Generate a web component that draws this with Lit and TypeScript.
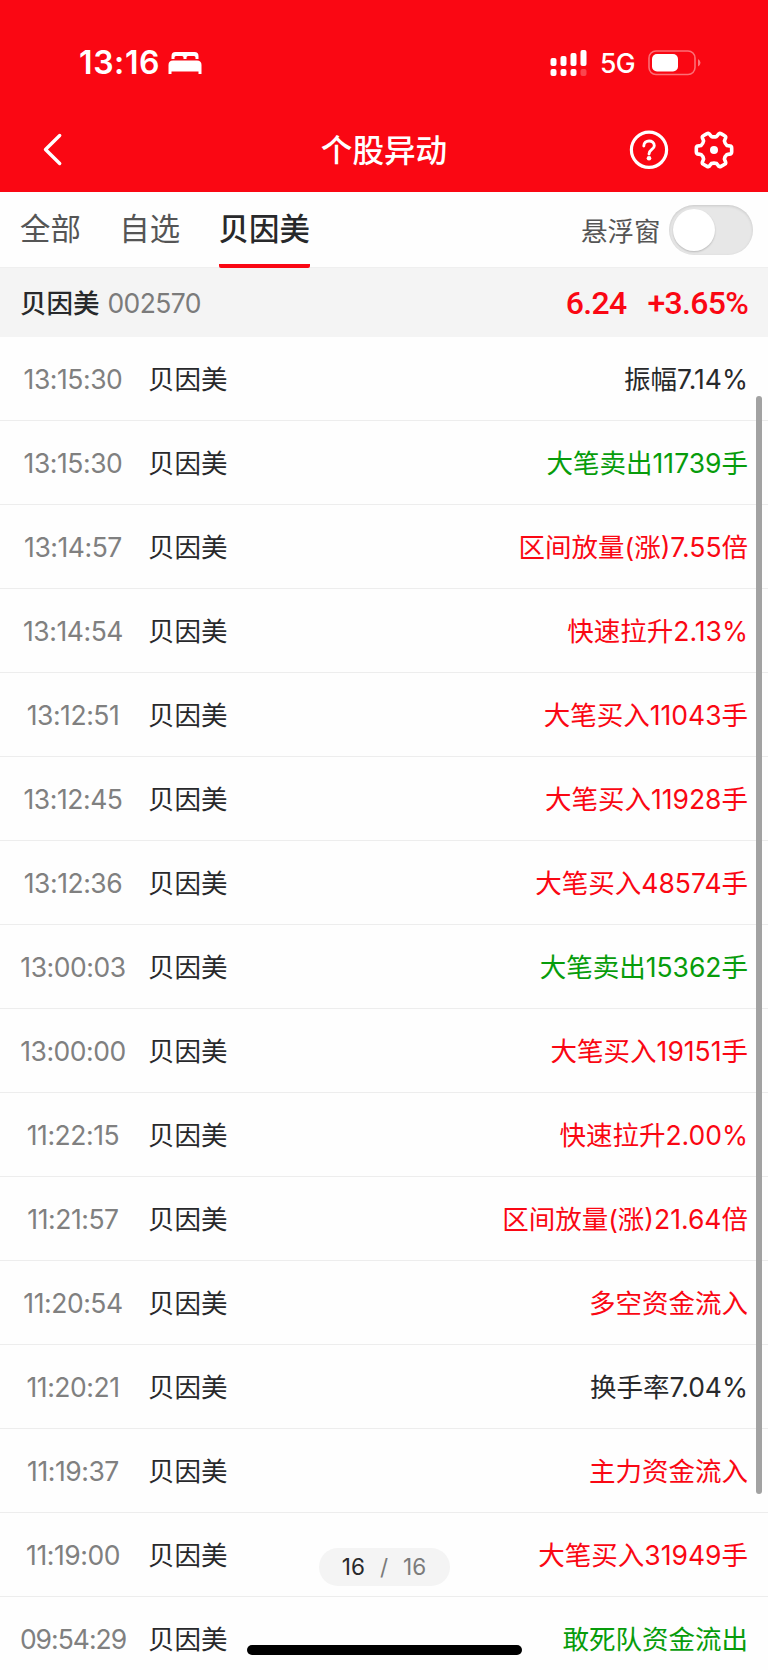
import { LitElement, html, css } from "lit";
import { customElement } from "lit/decorators.js";

type Tone = "plain" | "up" | "down";
const EVENTS: [string, string, Tone][] = [
  ["13:15:30", "振幅7.14%", "plain"],
  ["13:15:30", "大笔卖出11739手", "down"],
  ["13:14:57", "区间放量(涨)7.55倍", "up"],
  ["13:14:54", "快速拉升2.13%", "up"],
  ["13:12:51", "大笔买入11043手", "up"],
  ["13:12:45", "大笔买入11928手", "up"],
  ["13:12:36", "大笔买入48574手", "up"],
  ["13:00:03", "大笔卖出15362手", "down"],
  ["13:00:00", "大笔买入19151手", "up"],
  ["11:22:15", "快速拉升2.00%", "up"],
  ["11:21:57", "区间放量(涨)21.64倍", "up"],
  ["11:20:54", "多空资金流入", "up"],
  ["11:20:21", "换手率7.04%", "plain"],
  ["11:19:37", "主力资金流入", "up"],
  ["11:19:00", "大笔买入31949手", "up"],
  ["09:54:29", "敢死队资金流出", "down"],
];

// Six-toothed cog outline centred on (20, 20).
const at = (r: number, deg: number) => {
  const a = (deg * Math.PI) / 180;
  return `${(20 + r * Math.cos(a)).toFixed(2)} ${(20 + r * Math.sin(a)).toFixed(2)}`;
};
const COG =
  [0, 60, 120, 180, 240, 300]
    .map(
      (d, i) =>
        `${i ? "L" : "M"}${at(13.8, d - 19)} L${at(16, d - 15)} Q${at(18.2, d - 13)} ${at(17.8, d - 7)} L${at(17.8, d + 7)} Q${at(18.2, d + 13)} ${at(16, d + 15)} L${at(13.8, d + 19)} Q${at(12.6, d + 30)} ${at(13.8, d + 41)}`
    )
    .join(" ") + "Z";

@customElement("app-root")
export class AppRoot extends LitElement {
  static styles = css`
    :host { display: block; position: relative; width: 768px; height: 1670px; overflow: hidden; background: #fefefe; color: #28292b; font-family: "Inter", "Noto Sans CJK SC", sans-serif; font-size: 26.5px; white-space: nowrap; }
    * { box-sizing: border-box; }
    svg { display: block; flex: none; }
    .top { height: 192px; background: #fa0713; color: #fff; }
    .status { height: 108px; padding: 17px 67px 0 79px; display: flex; align-items: center; }
    .clock { font-size: 32px; font-weight: 600; letter-spacing: 0.6px; width: 89px; }
    .net { font-size: 26.5px; font-weight: 500; margin: 1px 13px 0 12px; letter-spacing: -0.6px; width: 35px; }
    .signal { margin-left: auto; }
    .nav { height: 84px; display: grid; grid-template-columns: 200px 1fr 200px; align-items: center; }
    .back { margin-left: 41px; }
    .title { text-align: center; font-size: 31.6px; font-weight: 500; padding: 0 0 4px 0; }
    .tools { display: flex; gap: 25px; justify-content: flex-end; padding-right: 34px; }
    .tabs { height: 76px; display: flex; padding: 0 15.5px 0 20px; gap: 38.5px; border-bottom: 1px solid #efefef; }
    .tab { height: 76px; line-height: 74px; font-size: 30.4px; color: #555; border-bottom: 4px solid transparent; }
    .tab.on { font-weight: 500; color: #28292b; border-color: #fa0713; border-radius: 2px; }
    .float { margin-left: auto; display: flex; align-items: center; gap: 8px; color: #555; }
    .switch { width: 84px; height: 50px; border-radius: 25px; background: #e7e7e7; padding: 4px; box-shadow: inset 0 1px 3px #0002; }
    .knob { width: 42px; height: 42px; border-radius: 50%; background: #fff; box-shadow: 0 1px 2px #0003; }
    .summary { height: 69px; background: #f4f4f4; display: flex; align-items: center; padding: 0 20px 0 20px; }
    .sname { font-weight: 500; padding-bottom: 2px; }
    .code { color: #7b7b7b; margin-left: 8px; letter-spacing: -0.6px; }
    .quote { margin-left: auto; display: flex; gap: 21px; font: 500 32px Roboto, sans-serif; color: #fa0713; letter-spacing: -0.7px; padding-top: 1px; }
    .row { height: 84px; display: flex; align-items: center; border-bottom: 1px solid #ededed; padding: 0 20px 0 20px; }
    .time { width: 106px; display: flex; justify-content: center; color: #808080; letter-spacing: -0.45px; }
    .time.wide { letter-spacing: -1px; }
    .name { margin-left: 22px; padding-bottom: 3px; }
    .msg { margin-left: auto; padding-bottom: 3px; }
    .up { color: #fa0713; }
    .down { color: #079c0b; }
    .bar { position: absolute; left: 756px; top: 396px; width: 6px; height: 1098px; border-radius: 3px; background: #a2a2a2; }
    .pager { position: absolute; left: 318.5px; top: 1548px; width: 131px; height: 38px; padding-bottom: 1px; border-radius: 19px; background: #f4f4f4; display: flex; justify-content: center; align-items: center; gap: 15px; font-size: 22.5px; color: #7b7b7b; }
    .pager b { font-weight: 400; color: #28292b; }
    .home { position: absolute; left: 246.5px; top: 1645px; width: 275px; height: 10px; border-radius: 5px; background: #000; }
  `;

  render() {
    return html`
      <header class="top">
        <div class="status">
          <span class="clock">13:16</span>
          <svg width="34" height="24" viewBox="0 0 34 24" fill="#fff"><path d="M3.5 8V5Q3.500 1 7.500 1H26.500Q30.500 1 30.500 5V8H27.500V6.500Q27.500 5 26 5H20Q18.500 5 18.500 6.500V8H15.500V6.500Q15.500 5 14 5H8Q6.500 5 6.500 6.500V8Z"/><path d="M0.500 23V14Q0.500 9.500 5 9.500H29Q33.500 9.500 33.500 14V23H30.500V20.500H3.500V23Z"/></svg>
          <svg class="signal" width="38" height="28" viewBox="0 0 38 28" fill="#fff"><rect x="0.500" y="9" width="6" height="8" rx="2"/><rect x="10.500" y="7" width="6" height="10" rx="2"/><rect x="20.500" y="4" width="6" height="13" rx="2"/><rect x="30.500" y="1" width="6" height="16" rx="2"/><rect x="0.500" y="20" width="6" height="7" rx="2"/><rect x="10.500" y="20" width="6" height="7" rx="2"/><rect x="20.500" y="20" width="6" height="7" rx="2"/><rect x="30.500" y="20" width="6" height="7" rx="2" opacity=".25"/></svg>
          <span class="net">5G</span>
          <svg width="53" height="26" viewBox="0 0 53 26"><rect x="1" y="1" width="46" height="23.500" rx="7" fill="none" stroke="#fff" stroke-opacity=".42" stroke-width="1.600"/><rect x="4" y="4" width="26" height="17.500" rx="5" fill="#fff"/><path d="M50 9Q52.500 10.500 52.500 12.800T50 16.500Z" fill="#fff" opacity=".45"/></svg>
        </div>
        <div class="nav">
          <svg class="back" width="24" height="36" viewBox="0 0 24 36"><path d="M18.700 3.500 4.500 17.500 18.700 31.500" fill="none" stroke="#fff" stroke-width="3.400" stroke-linecap="round" stroke-linejoin="round"/></svg>
          <span class="title">个股异动</span>
          <div class="tools">
            <svg width="40" height="40" viewBox="0 0 40 40" fill="none" stroke="#fff" stroke-width="3.200"><circle cx="20" cy="19.800" r="17.600"/><path d="M14.800 16C14.800 9.300 25.300 9.300 25.300 15.700C25.300 19.500 20 19.500 20 24" stroke-linecap="round" stroke-width="2.900"/><circle cx="20" cy="28.300" r="2.300" fill="#fff" stroke="none"/></svg>
            <svg width="40" height="40" viewBox="0 0 40 40" fill="none" stroke="#fff" stroke-width="3.600" stroke-linejoin="round"><path d=${COG}/><circle cx="20" cy="20" r="4" fill="#fff" stroke="none"/></svg>
          </div>
        </div>
      </header>
      <nav class="tabs">
        <span class="tab">全部</span><span class="tab">自选</span><span class="tab on">贝因美</span>
        <div class="float"><span>悬浮窗</span><div class="switch"><div class="knob"></div></div></div>
      </nav>
      <section class="summary"><span class="sname">贝因美</span><span class="code">002570</span><div class="quote"><span>6.24</span><span>+3.65%</span></div></section>
      <main>
        ${EVENTS.map(([t, m, tone]) => html`<div class="row"><span class="time ${t.includes("1") ? "" : "wide"}">${t}</span><span class="name">贝因美</span><span class="msg ${tone}">${m}</span></div>`)}
      </main>
      <div class="bar"></div>
      <div class="pager"><b>16</b><span>/</span><span>16</span></div>
      <div class="home"></div>
    `;
  }
}
